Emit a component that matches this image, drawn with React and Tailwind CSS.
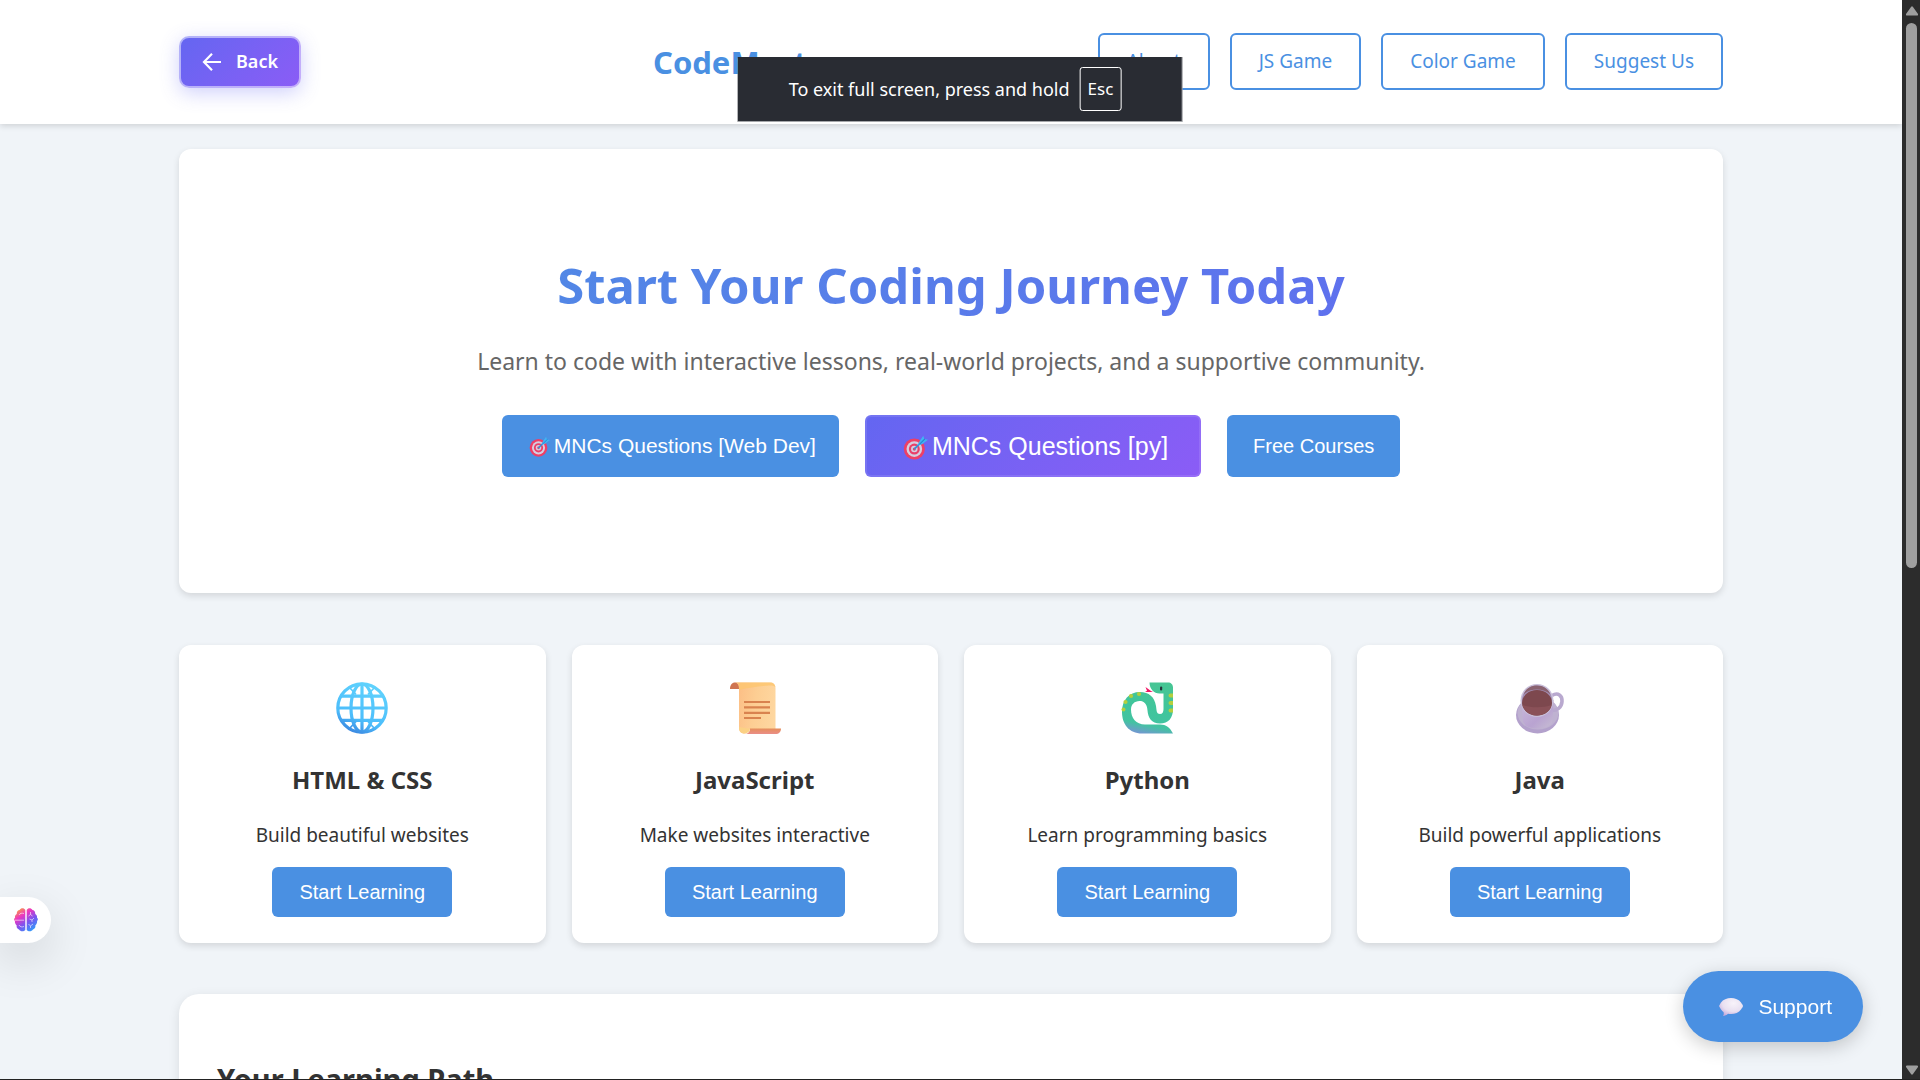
import React from 'react';

function Target({ className }) {
  return (
    <svg viewBox="0 0 32 32" className={className} aria-hidden="true">
      <circle cx="14.5" cy="18" r="13.5" fill="#ee3f66" />
      <circle cx="14.5" cy="18" r="10" fill="#d5cfe0" />
      <circle cx="14.5" cy="18" r="7" fill="#ea3f68" />
      <circle cx="14.5" cy="18" r="4.2" fill="#d5cfe0" />
      <circle cx="14.5" cy="18" r="2" fill="#d8476f" />
      <path d="M15 17.5 24 8.5" stroke="#3a8fd6" strokeWidth="2.4" strokeLinecap="round" />
      <path d="M20.5 9 26 1l1.2 4L32 6l-8 6-4.5 1z" fill="#41b4f3" />
      <path d="m21 12 7-7" stroke="#2583cf" strokeWidth="1.4" />
    </svg>
  );
}

function Globe() {
  return (
    <svg viewBox="0 0 52 52" className="size-[52px]" aria-hidden="true">
      <defs>
        <linearGradient id="globe-line" gradientUnits="userSpaceOnUse" x1="34" y1="2" x2="14" y2="50">
          <stop offset="0" stopColor="#5fd2fd" />
          <stop offset="0.7" stopColor="#4cbdfb" />
          <stop offset="1" stopColor="#3a86e0" />
        </linearGradient>
      </defs>
      <g fill="none" stroke="url(#globe-line)" strokeWidth="3.2">
        <circle cx="26" cy="26" r="24.2" />
        <ellipse cx="26" cy="26" rx="11" ry="24" />
        <path d="M5 14.2h42M5 38.3h42M2 26h48M26 2v48" />
        <path d="M13.5 5.500 20 12.500M38.500 5.500 32 12.500M13.500 46.500 20 39.500M38.500 46.500 32 39.500" strokeWidth="1.800" />
      </g>
    </svg>
  );
}

function Scroll() {
  return (
    <svg viewBox="0 0 52 52" className="size-[52px]" aria-hidden="true">
      <defs>
        <linearGradient id="paper" x1="0" y1="0.300" x2="1" y2="0.500">
          <stop offset="0" stopColor="#fcbd84" />
          <stop offset="0.500" stopColor="#fdce93" />
          <stop offset="1" stopColor="#fed7a0" />
        </linearGradient>
        <linearGradient id="roll" x1="0" y1="0" x2="0" y2="1">
          <stop offset="0" stopColor="#e58e5a" />
          <stop offset="1" stopColor="#ea8e88" />
        </linearGradient>
      </defs>
      <path d="M1 7C1 3 3 .500 6 .500S11 3 11 7z" fill="#cf7450" />
      <path d="M6 .500h35c3.500 0 5.500 2 5.500 5.500v41H20l-4 4.500c-4 0-6-2-6-6V7C10 3.500 9 1 6 .500z" fill="url(#paper)" />
      <path d="M10 5c0-3-1.500-4.500-4-4.500h35c3 0 5 1.500 5.400 4.500-3-2-6-1.500-12-1S18 6 10 8z" fill="#fdc66f" opacity="0.800" />
      <path d="M21 46.500h31c0 3.500-2 5.500-5.500 5.500H15c4 0 6-2 6-5.500z" fill="url(#roll)" />
      <path d="M10 45c0 4.500 2 6.500 5.500 6.500S21 49 21 46.500h-2z" fill="#fbd185" />
      <path d="M15 20h26M15 25.300h26M15 30.900h26M15 36h17" stroke="#d9834f" strokeWidth="2.200" />
    </svg>
  );
}

function Snake() {
  return (
    <svg viewBox="0 0 52 52" className="size-[52px]" aria-hidden="true">
      <defs>
        <linearGradient id="snake-skin" x1="0.600" y1="0" x2="0.400" y2="1">
          <stop offset="0" stopColor="#46c594" />
          <stop offset="0.500" stopColor="#40c59c" />
          <stop offset="0.820" stopColor="#43c3a1" />
          <stop offset="1" stopColor="#7199cf" />
        </linearGradient>
      </defs>
      <path d="m30 9-5.500-4 1.500 3.800L24 10h8z" fill="#ef1763" />
      <path
        d="M28.500 .500H47c3 0 5 2 5 5V27c0 9-4.500 14.500-13 14.500-8.500 0-12-6-12.500-13-.5-7-3.500-9.500-8-9.500-5 0-8.500 3.500-8.500 8.500C10 36 15 42.500 24 42.500h15c6 0 10 3 13 9H21C8 51.500 1 42 1 30 1 18 8 10 19 10c9 0 14.500 5 16 14 .700 5 .500 8 4 8 2.500 0 3.500-2 3.500-5V11.500h-4C33 11.500 28.500 7 28.500 .500z"
        fill="url(#snake-skin)"
      />
      <g fill="#b4cf3d">
        <path d="M52 11.500h-2.500a2 2 0 0 0 0 4H52zM52 19h-2.500a2 2 0 0 0 0 4H52zM52 26.500h-2.500a2 2 0 0 0 0 4H52z" />
        <circle cx="18" cy="12" r="2.100" />
        <circle cx="10" cy="14" r="2.100" />
        <circle cx="4.500" cy="20" r="2.100" />
        <circle cx="2.500" cy="27.500" r="2" />
      </g>
      <rect x="39" y="4.500" width="2.200" height="4" rx="1" fill="#25343b" />
    </svg>
  );
}

function Mug() {
  return (
    <svg viewBox="0 0 52 52" className="size-[52px]" aria-hidden="true">
      <defs>
        <linearGradient id="mug-body" x1="0" y1="0" x2="1" y2="1">
          <stop offset="0" stopColor="#c9bbdb" />
          <stop offset="0.600" stopColor="#b9a3d1" />
          <stop offset="1" stopColor="#c7bed3" />
        </linearGradient>
      </defs>
      <ellipse cx="23.500" cy="33" rx="21.500" ry="18.500" fill="#b3a1cc" />
      <ellipse cx="24" cy="31" rx="20.500" ry="16.500" fill="#bfb2d1" />
      <path d="M38 13.500c6-3.500 10.500 0 10 6-.4 6-5 9.500-11 9" fill="none" stroke="#b9a9cf" strokeWidth="3.600" />
      <path d="M7 18 9 39c1 5 7 7.500 14 7.500S38 44 38.500 39L39.500 18z" fill="url(#mug-body)" />
      <ellipse cx="23" cy="18.500" rx="16.500" ry="16.500" fill="#c9bfd9" />
      <ellipse cx="23" cy="18.500" rx="15" ry="15" fill="#a28eb4" />
      <path d="M9.500 12.500C12 6.500 17 3.600 23 3.600s11 2.900 13.500 8.900C33 9 28 7.500 23 7.500S13 9 9.500 12.500z" fill="#8a6270" />
      <ellipse cx="23" cy="20.800" rx="15" ry="12.700" fill="#7d484e" />
      <path d="M8.500 23c8 3 21 3 29 0-1.500 6.500-8 10.500-14.500 10.500S10 29.500 8.500 23z" fill="#8a5158" />
    </svg>
  );
}

function Brain() {
  return (
    <svg viewBox="0 0 24 24" className="size-6" aria-hidden="true">
      <defs>
        <linearGradient id="brain-fill" x1="0.150" y1="0" x2="0.850" y2="1">
          <stop offset="0" stopColor="#fba63a" />
          <stop offset="0.300" stopColor="#ec36c0" />
          <stop offset="0.600" stopColor="#7a55f0" />
          <stop offset="1" stopColor="#27a7fb" />
        </linearGradient>
      </defs>
      <path
        d="M11.300 2v20c-1.500 1.800-5 1.800-6.300-.5-1.500-.2-2.800-2-2.300-4C1.500 16.500.500 14.500 1 13c-1.200-1-1.200-2.500 0-3.300C.700 8 1.500 6.500 2.800 6 2.500 3.800 4 2.200 5.500 2 7-.2 10-.2 11.300 2zM12.700 2v20c1.500 1.800 5 1.800 6.300-.5 1.500-.2 2.800-2 2.300-4 1.200-1 2.200-3 1.700-4.500 1.200-1 1.200-2.500 0-3.300.300-1.700-.5-3.200-1.800-3.700.300-2.200-1.200-3.800-2.700-4C17-.2 14-.2 12.700 2z"
        fill="url(#brain-fill)"
      />
      <path
        d="M1 12.200h9M5 7c1-2 3-2 5-1.500M5 17c1 2 3 2.300 5 1.500M16.500 4v2.500l-2 1.500M16.500 6.500l2 1.500M20 10l-2 2-2.500-1M18 12v2M14.500 16l2 2 2.500-2M16.500 18v2"
        fill="none"
        stroke="#fff"
        strokeOpacity="0.650"
        strokeWidth="0.900"
      />
    </svg>
  );
}

function Bubble() {
  return (
    <svg viewBox="0 0 24 18" className="h-[18px] w-6" aria-hidden="true">
      <defs>
        <radialGradient id="bubble-fill" cx="0.600" cy="0.300" r="0.750">
          <stop offset="0" stopColor="#f8f3fa" />
          <stop offset="0.600" stopColor="#e9e0f1" />
          <stop offset="1" stopColor="#c3a9dc" />
        </radialGradient>
      </defs>
      <path
        d="M12 0c4 0 8 1.500 10 4.500.700 1.300 2 2.500 2 3.500s-1.300 2.200-2 3.500C20 14.500 16 16 12 16c-1 0-2-.1-3-.3C7.500 17 6 17.800 4 18c.8-1 1-2.500.500-4C2.500 12.500 2 11.500 0 8c1-1.500 1.300-2.500 2-3.500C4 1.500 8 0 12 0z"
        fill="url(#bubble-fill)"
      />
    </svg>
  );
}

const navLinks = ['About', 'JS Game', 'Color Game', 'Suggest Us'];

const courses = [
  { title: 'HTML & CSS', text: 'Build beautiful websites', Icon: Globe },
  { title: 'JavaScript', text: 'Make websites interactive', Icon: Scroll },
  { title: 'Python', text: 'Learn programming basics', Icon: Snake },
  { title: 'Java', text: 'Build powerful applications', Icon: Mug },
];

const arial = "font-['Liberation_Sans',Arial,sans-serif]";

function Header() {
  return (
    <header className="bg-white px-[179px] pt-[33px] pb-[34px] text-[#4a90e2] shadow-[0_2px_6px_rgba(0,0,0,0.14)]">
      <div className="flex items-center">
        <div className="w-[474px] shrink">
          <button
            type="button"
            className="flex h-[52px] items-center gap-3.5 rounded-[10px] border-2 border-white/50 bg-linear-135 from-[#6366f1] to-[#8b5cf6] bg-origin-border px-[21px] text-[18px] font-semibold text-white shadow-[0_5px_19px_rgba(99,102,241,0.3)]"
          >
            <svg viewBox="0 0 20 20" className="size-5" fill="none" stroke="currentColor" strokeWidth="2.200" aria-hidden="true">
              <path d="M19 10H2M10 1.800 2 10l8 8.200" />
            </svg>
            Back
          </button>
        </div>
        <div className="text-[31px] leading-[50px] font-bold">CodeMaster</div>
        <nav className="ml-auto flex gap-5">
          {navLinks.map((label) => (
            <a
              key={label}
              href="#"
              className="flex h-[57px] items-center rounded-md border-2 border-[#4a90e2] px-[27px] text-[19px] whitespace-nowrap"
            >
              {label}
            </a>
          ))}
        </nav>
      </div>
    </header>
  );
}

function Hero() {
  return (
    <section className="rounded-xl bg-white px-[38px] pt-[97px] pb-[116px] text-center shadow-[0_3px_7px_rgba(0,0,0,0.12)]">
      <h1 className="bg-linear-135 from-[#4a90e2] to-[#6366f1] bg-clip-text text-[49px] leading-[78px] font-bold text-transparent">
        Start Your Coding Journey Today
      </h1>
      <p className="mt-[19px] text-[23px] leading-9 text-[#666]">
        Learn to code with interactive lessons, real-world projects, and a supportive community.
      </p>
      <div className={`mt-9 flex justify-center gap-[26px] text-white ${arial}`}>
        <button type="button" className="flex h-[62px] items-center gap-1 rounded-md bg-[#4a90e2] pr-[23px] pl-[27px] text-[21px]">
          <Target className="size-[21px]" />
          MNCs Questions [Web Dev]
        </button>
        <button
          type="button"
          className="flex h-[62px] items-center gap-1 rounded-md border-2 border-white/10 bg-linear-135 from-[#6366f1] to-[#8b5cf6] bg-origin-border pt-0.5 pr-[31px] pl-9 text-[25px]"
        >
          <Target className="size-[25px]" />
          MNCs Questions [py]
        </button>
        <button type="button" className="h-[62px] rounded-md bg-[#4a90e2] px-[26px] text-[20px]">
          Free Courses
        </button>
      </div>
    </section>
  );
}

function CourseCard({ title, text, Icon }) {
  return (
    <article className="flex flex-col items-center rounded-xl bg-white px-[26px] pt-[37px] pb-[26px] text-center shadow-[0_3px_7px_rgba(0,0,0,0.12)]">
      <Icon />
      <h3 className="mt-[27px] text-[24px] leading-[38px] font-bold">{title}</h3>
      <p className="mt-[21px] text-[19px] leading-[30px]">{text}</p>
      <button type="button" className={`mt-[17px] h-[50px] rounded-md bg-[#4a90e2] px-[27px] text-[20px] text-white ${arial}`}>
        Start Learning
      </button>
    </article>
  );
}

function Scrollbar() {
  return (
    <div className="flex w-[18px] shrink-0 flex-col items-center bg-[#2c2c2c] pt-1.5 pb-1 pl-px" aria-hidden="true">
      <svg viewBox="0 0 12 10" className="h-2.5 w-3">
        <path d="M5 1q1-1.500 2 0l5 7q.3 1.500-1 1.500H1Q-.3 9.500 0 8z" fill="#9f9f9f" />
      </svg>
      <div className="mt-[7px] h-[51%] w-[11px] rounded-full bg-[#9f9f9f]" />
      <svg viewBox="0 0 12 10" className="mt-auto h-2.5 w-3">
        <path d="M5 9q1 1.500 2 0l5-7Q12.300.500 11 .500H1Q-.3.500 0 2z" fill="#9f9f9f" />
      </svg>
    </div>
  );
}

export default function App() {
  return (
    <div className="flex h-screen flex-col overflow-hidden border-b border-[#222] bg-[#f0f4f8] font-['Noto_Sans','Segoe_UI',sans-serif] text-[#333]">
      <div className="flex min-h-0 flex-1">
        <div className="min-w-0 flex-1 overflow-hidden">
          <Header />
          <main className="flex flex-col px-[179px] pt-[25px]">
            <Hero />
            <section className="mt-[52px] grid grid-cols-4 gap-[26px]">
              {courses.map((course) => (
                <CourseCard key={course.title} {...course} />
              ))}
            </section>
            <section className="mt-[51px] rounded-[20px] bg-white px-[38px] pt-[62px] pb-10 shadow-[0_3px_12px_rgba(0,0,0,0.1)]">
              <h2 className="text-[29px] leading-[46px] font-bold">Your Learning Path</h2>
            </section>
          </main>
        </div>
        <Scrollbar />
      </div>

      <div className="fixed top-[57px] left-1/2 flex h-[65px] -translate-x-1/2 items-center gap-2.5 border-r border-b border-[#a5a7aa] bg-[#292c33] pr-[60px] pl-[51px] text-[18px] whitespace-nowrap text-white">
        To exit full screen, press and hold
        <kbd className="flex h-11 items-center rounded-[3px] border border-white px-[7px] font-['Noto_Sans',sans-serif] text-[17px]">
          Esc
        </kbd>
      </div>

      <button
        type="button"
        aria-label="Assistant"
        className="fixed bottom-[137px] left-0 flex h-[46px] items-center rounded-r-full bg-white pr-[13px] pl-3.5 shadow-[0_16px_48px_rgba(0,0,0,0.14)]"
      >
        <Brain />
      </button>

      <button
        type="button"
        className={`fixed right-[57px] bottom-[38px] flex h-[71px] items-center gap-[15px] rounded-full bg-[#4a90e2] pr-[31px] pl-9 text-[21px] text-white shadow-[0_5px_19px_rgba(0,0,0,0.2)] ${arial}`}
      >
        <Bubble />
        Support
      </button>
    </div>
  );
}
